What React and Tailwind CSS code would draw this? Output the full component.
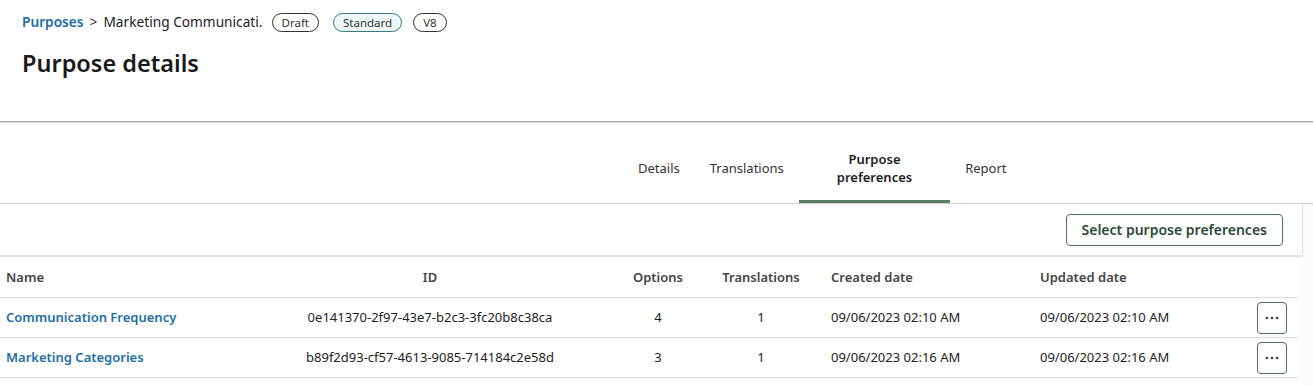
const rows = [
  {
    name: 'Communication Frequency',
    id: '0e141370-2f97-43e7-b2c3-3fc20b8c38ca',
    options: 4,
    translations: 1,
    created: '09/06/2023 02:10 AM',
    updated: '09/06/2023 02:10 AM',
  },
  {
    name: 'Marketing Categories',
    id: 'b89f2d93-cf57-4613-9085-714184c2e58d',
    options: 3,
    translations: 1,
    created: '09/06/2023 02:16 AM',
    updated: '09/06/2023 02:16 AM',
  },
];

const cols = 'grid grid-cols-[250px_360px_96px_110px_215px_209px_63px]';

function Pill({ children, className = '' }) {
  return (
    <span className={`inline-flex h-[19px] items-center rounded-full border px-[9px] text-[11.5px] leading-none text-[#333] ${className}`}>
      {children}
    </span>
  );
}

function Tab({ children, active }) {
  return (
    <div className={`flex h-full flex-col items-center justify-center border-b-[3px] pt-[12px] text-center text-[13px] leading-[18px] ${active ? 'border-[#5a7d64] px-[38px] font-semibold text-[#222]' : 'border-transparent px-[15px] text-[#333]'}`}>
      {children}
    </div>
  );
}

function Dots() {
  return (
    <button className="flex h-[32px] w-[30px] items-center justify-center rounded-[4px] border border-[#4f6f58] bg-white">
      <svg width="14" height="4" viewBox="0 0 14 4">
        <circle cx="2" cy="2" r="1.3" fill="#2f4a38" />
        <circle cx="7" cy="2" r="1.3" fill="#2f4a38" />
        <circle cx="12" cy="2" r="1.3" fill="#2f4a38" />
      </svg>
    </button>
  );
}

export default function App() {
  return (
    <div className="h-[386px] w-[1313px] overflow-hidden bg-white font-['Noto_Sans',sans-serif] text-[#333]">
      {/* header */}
      <div className="h-[121px] px-[22px] pt-[12px]">
        <div className="flex h-[21px] items-center text-[13.7px]">
          <span className="font-semibold text-[#1c6ea4]">Purposes</span>
          <span className="mx-[6px] text-[#333]">&gt;</span>
          <span className="text-[#222]">Marketing Communicati.</span>
          <Pill className="ml-[9px] border-[#333]">Draft</Pill>
          <Pill className="ml-[14px] border-[#3d7584] bg-[#eef6f8]">Standard</Pill>
          <Pill className="ml-[11px] border-[#333] px-[8px]">V8</Pill>
        </div>
        <h1 className="mt-[14px] text-[23.5px] font-semibold leading-[32px] text-[#1a1a1a]">Purpose details</h1>
      </div>
      <div className="h-[2px] border-t border-[#a9a9a9] bg-[#dedede]" />

      {/* tabs */}
      <div className="flex h-[81px] border-b border-[#cfcfcf] pl-[623px]">
        <Tab>Details</Tab>
        <Tab>Translations</Tab>
        <Tab active>
          <span>Purpose</span>
          <span>preferences</span>
        </Tab>
        <Tab>Report</Tab>
      </div>

      <div className="flex">
        <div className="w-[1303px]">
          {/* toolbar */}
          <div className="flex h-[53px] items-center justify-end border-r border-b-2 border-[#e3e3e3] pr-[19px]">
            <button className="h-[32px] rounded-[4px] border border-[#4f6f58] px-[15px] text-[14px] font-semibold text-[#2f4a38]">
              Select purpose preferences
            </button>
          </div>

          {/* table */}
          <div className="pr-[5px]">
            <div className={`${cols} h-[41px] items-center border-b border-[#dcdcdc] pt-[2px] text-[13px] font-semibold text-[#444]`}>
              <div className="pl-[6px]">Name</div>
              <div className="text-center">ID</div>
              <div className="text-center">Options</div>
              <div className="text-center">Translations</div>
              <div className="pl-[15px]">Created date</div>
              <div className="pl-[9px]">Updated date</div>
              <div />
            </div>
            {rows.map((r) => (
              <div key={r.id} className={`${cols} h-[40px] items-center border-b border-[#dcdcdc] text-[13px] text-[#222]`}>
                <div className="pl-[6px] font-semibold text-[#1c6ea4]">{r.name}</div>
                <div className="text-center">{r.id}</div>
                <div className="text-center">{r.options}</div>
                <div className="text-center">{r.translations}</div>
                <div className="pl-[15px]">{r.created}</div>
                <div className="pl-[9px]">{r.updated}</div>
                <div className="flex justify-start pl-[17px]">
                  <Dots />
                </div>
              </div>
            ))}
          </div>
        </div>
        <div className="h-[200px] flex-1 bg-[#fafafa]" />
      </div>
    </div>
  );
}
